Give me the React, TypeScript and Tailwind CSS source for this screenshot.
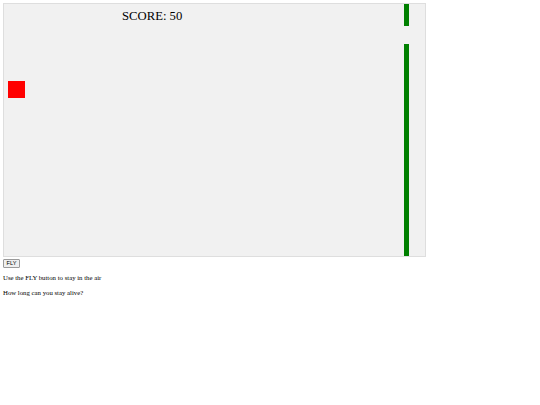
import React from "react";

export default function App() {
  return (
    <div className="min-h-[405px] w-[540px] bg-white pl-[3px] pt-[3px] text-black" style={{ fontFamily: '"Liberation Serif", "Times New Roman", serif' }}>
      <div className="relative h-[254px] w-[423px] border border-[#dedede] bg-[#f1f1f1]">
        <div className="absolute left-[118px] top-[6px] whitespace-nowrap text-[12.7px] leading-none text-black" style={{ fontFamily: '"Liberation Serif", serif' }}>
          SCORE: 50
        </div>
        <div className="absolute left-[4px] top-[77px] h-[17px] w-[17px] bg-[#ff0000]" />
        <div className="absolute left-[400px] top-0 h-[22px] w-[5px] bg-[#008000]" />
        <div className="absolute bottom-0 left-[400px] top-[40px] w-[5px] bg-[#008000]" />
      </div>
      <button
        className="mt-[2px] flex h-[9px] w-[17px] items-center justify-center rounded-[1px] border border-[#9a9a9a] bg-[#efefef] p-0 text-[5.6px] leading-none text-black"
        style={{ fontFamily: '"Liberation Sans", Arial, sans-serif' }}
      >
        FLY
      </button>
      <p className="mt-[5.5px] text-[6.77px] leading-[7.8px]">Use the FLY button to stay in the air</p>
      <p className="mt-[7.8px] text-[6.77px] leading-[7.8px]">How long can you stay alive?</p>
    </div>
  );
}
